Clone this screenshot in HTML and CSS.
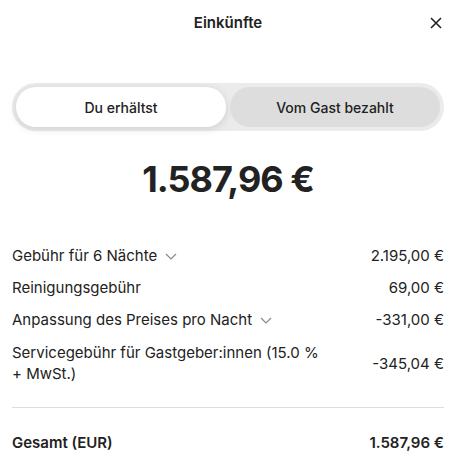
FILE: index.html
```html
<!DOCTYPE html>
<html lang="de">
    <head>
        <meta charset="UTF-8">
        <meta name="viewport" content="width=device-width, initial-scale=1.0">
        <title>Einkünfte</title>
        <link rel="stylesheet" href="styles.css">
    </head>
    <body>
        <header class="kopf">
            <h1>Einkünfte</h1>
            <button class="schliessen" aria-label="Schließen">
                <svg viewBox="0 0 12 12" width="12" height="12"><path d="M1 1 L11 11 M11 1 L1 11" stroke="#222" stroke-width="1.6" fill="none"/></svg>
            </button>
        </header>

        <div class="umschalter">
            <button class="tab aktiv">Du erhältst</button>
            <button class="tab">Vom Gast bezahlt</button>
        </div>

        <div class="betrag">1.587,96 €</div>

        <ul class="posten">
            <li>
                <span class="name">Gebühr für 6 Nächte <svg class="pfeil" viewBox="0 0 12 7" width="12" height="7"><path d="M1 1 L6 6 L11 1" stroke="#888" stroke-width="1.2" fill="none"/></svg></span>
                <span class="wert">2.195,00 €</span>
            </li>
            <li>
                <span class="name">Reinigungsgebühr</span>
                <span class="wert">69,00 €</span>
            </li>
            <li>
                <span class="name">Anpassung des Preises pro Nacht <svg class="pfeil" viewBox="0 0 12 7" width="12" height="7"><path d="M1 1 L6 6 L11 1" stroke="#888" stroke-width="1.2" fill="none"/></svg></span>
                <span class="wert">-331,00 €</span>
            </li>
            <li class="zweizeilig">
                <span class="name">Servicegebühr für Gastgeber:innen (15.0 % + MwSt.)</span>
                <span class="wert">-345,04 €</span>
            </li>
        </ul>

        <div class="gesamt">
            <span>Gesamt (EUR)</span>
            <span>1.587,96 €</span>
        </div>
    </body>
</html>
```

FILE: styles.css
```css
body {
    margin: 0;
    padding: 0 13px 0 12px;
    font-family: Inter, "Noto Sans", sans-serif;
    color: #222222;
    background: #ffffff;
}

.kopf {
    position: relative;
    height: 45px;
    display: flex;
    align-items: center;
    justify-content: center;
}

.kopf h1 {
    margin: 0;
    font-size: 15px;
    font-weight: 600;
}

.schliessen {
    position: absolute;
    right: 0;
    top: 15px;
    background: none;
    border: none;
    padding: 2px;
    cursor: pointer;
}

.umschalter {
    margin-top: 38px;
    display: flex;
    gap: 4px;
    padding: 4px;
    background: #ebebeb;
    border-radius: 24px;
}

.tab {
    flex: 1;
    height: 40px;
    border: none;
    border-radius: 20px;
    background: #dddddd;
    font-family: inherit;
    font-size: 14px;
    font-weight: 500;
    color: #222222;
    cursor: pointer;
}

.tab.aktiv {
    background: #ffffff;
    box-shadow: 0 2px 8px rgba(0, 0, 0, 0.12);
}

.betrag {
    margin-top: 26px;
    text-align: center;
    font-size: 36px;
    font-weight: 700;
    letter-spacing: -1px;
}

.posten {
    list-style: none;
    margin: 39px 0 0;
    padding: 0 0 17px;
    border-bottom: 1px solid #dddddd;
}

.posten li {
    display: flex;
    justify-content: space-between;
    align-items: center;
    font-size: 15px;
    line-height: 20px;
    padding: 6px 0;
}

.posten .name {
    display: flex;
    align-items: center;
    gap: 8px;
}

.posten .zweizeilig {
    line-height: 21px;
}

.zweizeilig .name {
    display: block;
    max-width: 320px;
}

.wert {
    white-space: nowrap;
}

.gesamt {
    display: flex;
    justify-content: space-between;
    padding-top: 25px;
    font-size: 15px;
    font-weight: 600;
}
```
